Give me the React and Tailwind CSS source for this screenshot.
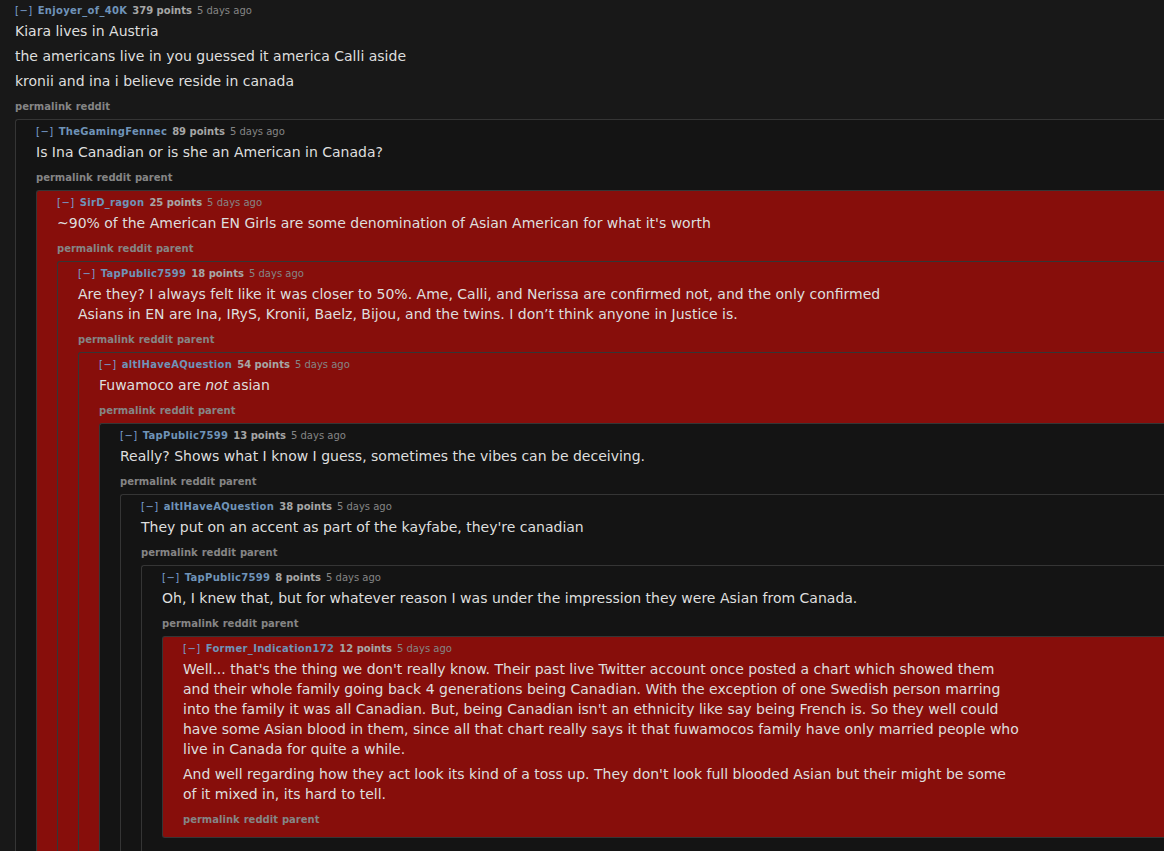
import React from "react";

const FONT = { fontFamily: '"DejaVu Sans", Verdana, sans-serif' };

const tree = {
  user: "Enjoyer_of_40K",
  points: "379 points",
  links: ["permalink", "reddit"],
  body: [
    "Kiara lives in Austria",
    "the americans live in you guessed it america Calli aside",
    "kronii and ina i believe reside in canada",
  ],
  child: {
    user: "TheGamingFennec",
    points: "89 points",
    bg: "dark",
    body: ["Is Ina Canadian or is she an American in Canada?"],
    child: {
      user: "SirD_ragon",
      points: "25 points",
      bg: "red",
      body: [
        "~90% of the American EN Girls are some denomination of Asian American for what it's worth",
      ],
      child: {
        user: "TapPublic7599",
        points: "18 points",
        bg: "red",
        body: [
          "Are they? I always felt like it was closer to 50%. Ame, Calli, and Nerissa are confirmed not, and the only confirmed Asians in EN are Ina, IRyS, Kronii, Baelz, Bijou, and the twins. I don\u2019t think anyone in Justice is.",
        ],
        child: {
          user: "altIHaveAQuestion",
          points: "54 points",
          bg: "red",
          body: [
            <>
              Fuwamoco are <em>not</em> asian
            </>,
          ],
          child: {
            user: "TapPublic7599",
            points: "13 points",
            bg: "dark",
            body: [
              "Really? Shows what I know I guess, sometimes the vibes can be deceiving.",
            ],
            child: {
              user: "altIHaveAQuestion",
              points: "38 points",
              bg: "dark",
              body: [
                "They put on an accent as part of the kayfabe, they're canadian",
              ],
              child: {
                user: "TapPublic7599",
                points: "8 points",
                bg: "dark",
                body: [
                  "Oh, I knew that, but for whatever reason I was under the impression they were Asian from Canada.",
                ],
                child: {
                  user: "Former_Indication172",
                  points: "12 points",
                  bg: "red",
                  last: true,
                  body: [
                    "Well... that's the thing we don't really know. Their past live Twitter account once posted a chart which showed them and their whole family going back 4 generations being Canadian. With the exception of one Swedish person marring into the family it was all Canadian. But, being Canadian isn't an ethnicity like say being French is. So they well could have some Asian blood in them, since all that chart really says it that fuwamocos family have only married people who live in Canada for quite a while.",
                    "And well regarding how they act look its kind of a toss up. They don't look full blooded Asian but their might be some of it mixed in, its hard to tell.",
                  ],
                },
              },
            },
          },
        },
      },
    },
  },
};

function Tagline({ user, points }) {
  return (
    <div className="text-[10px] leading-[14px] whitespace-nowrap flex">
      <span className="text-[#7a9fd2] mr-[5px] tracking-[0.5px]">[&minus;]</span>
      <span className="font-bold text-[#6f93b8] mr-[5px] tracking-[0.3px]">{user}</span>
      <span className="font-bold text-[#a6a6a6] mr-[5px]">{points}</span>
      <span className="text-[#858585]">5 days ago</span>
    </div>
  );
}

function Content({ c }) {
  const links = c.links || ["permalink", "reddit", "parent"];
  return (
    <>
      <Tagline user={c.user} points={c.points} />
      <div className="max-w-[840px] text-[14px] leading-[20px] text-[#dedede] mt-[3px]">
        {c.body.map((p, i) => (
          <p key={i} className={i > 0 ? "mt-[5px]" : ""}>
            {p}
          </p>
        ))}
      </div>
      <div className="mt-[9px] text-[10px] leading-[14px] font-bold text-[#858585] flex gap-[4px]">
        {links.map((l) => (
          <span key={l}>{l}</span>
        ))}
      </div>
    </>
  );
}

function Box({ c }) {
  const bg = c.bg === "red" ? "bg-[#870e0b]" : "bg-[#141414]";
  return (
    <div
      className={`${bg} mt-[5px] border border-r-0 border-[#353535] rounded-l-[3px] pl-[20px] pt-[5px] ${
        c.last ? "pb-[10px]" : "pb-[18px]"
      }`}
    >
      <Content c={c} />
      {c.child && <Box c={c.child} />}
    </div>
  );
}

export default function App() {
  return (
    <div
      className="w-[1164px] h-[851px] overflow-hidden bg-[#181818] pl-[15px] pt-[4px]"
      style={FONT}
    >
      <Content c={tree} />
      <Box c={tree.child} />
    </div>
  );
}
